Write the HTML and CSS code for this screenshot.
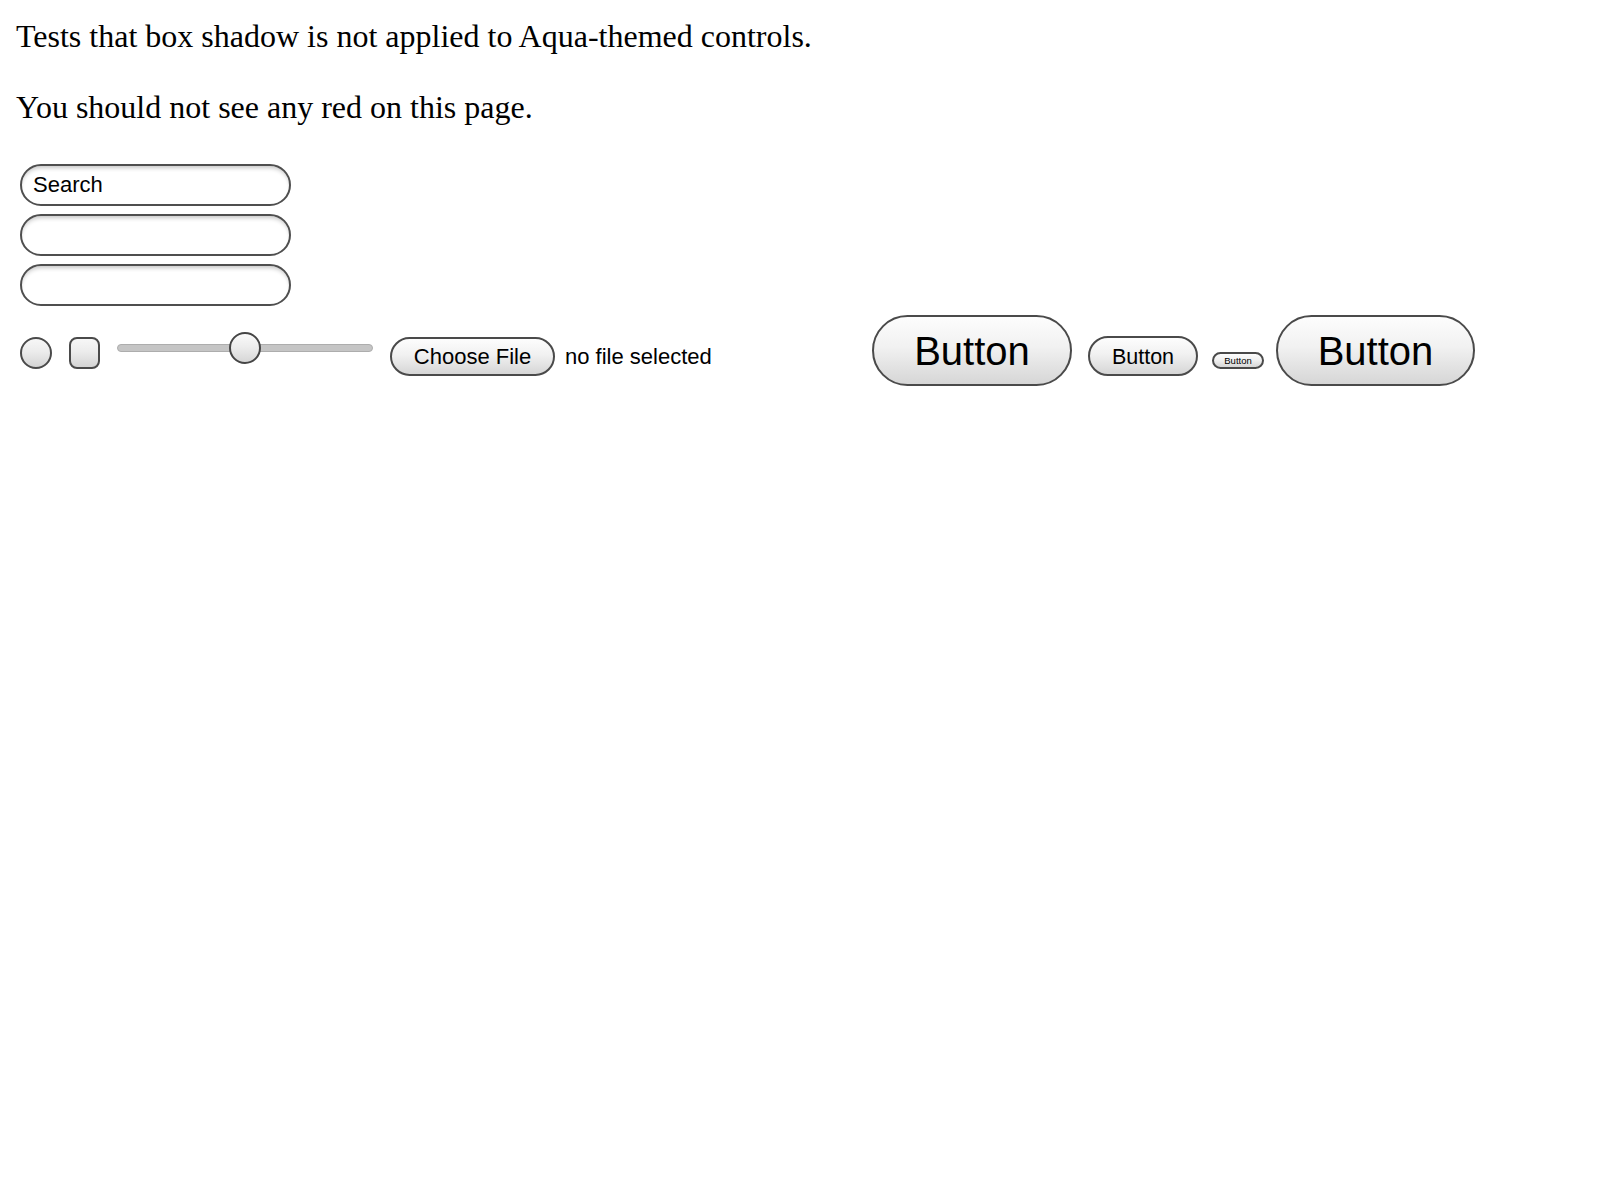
FILE: index.html
```html
<!DOCTYPE html>
<html lang="en">
<head>
<meta charset="utf-8">
<title>Box shadow on Aqua-themed controls</title>
<link rel="stylesheet" href="styles.css">
</head>
<body>
<p class="intro">Tests that box shadow is not applied to Aqua-themed controls.</p>
<p class="intro second">You should not see any red on this page.</p>
<div class="fields">
  <input class="field" type="text" value="Search" aria-label="Search">
  <input class="field" type="text" aria-label="Text field">
  <input class="field" type="text" aria-label="Text field">
</div>
<div class="controls">
  <input class="radio" type="radio" aria-label="Radio">
  <input class="check" type="checkbox" aria-label="Checkbox">
  <input class="slider" type="range" min="0" max="100" value="50" aria-label="Slider">
  <button class="btn file-btn" type="button">Choose File</button>
  <span class="file-text">no file selected</span>
  <button class="btn big" type="button">Button</button>
  <button class="btn medium" type="button">Button</button>
  <button class="btn small" type="button">Button</button>
  <button class="btn big big-last" type="button">Button</button>
</div>
</body>
</html>
```
FILE: styles.css
```css
html, body {
  background: #ffffff;
}

body {
  margin: 0;
  padding: 18px 0 0 16px;
  font-family: "Liberation Serif", "Times New Roman", serif;
  color: #000000;
}

.intro {
  margin: 0;
  font-size: 32px;
  line-height: 37px;
}

.intro.second {
  margin-top: 34px;
}

.fields {
  display: flex;
  flex-direction: column;
  gap: 8px;
  margin: 38px 0 0 4px;
}

.field {
  -webkit-appearance: none;
  appearance: none;
  display: block;
  width: 271px;
  height: 42px;
  box-sizing: border-box;
  margin: 0;
  padding: 0 0 0 11px;
  border: 2px solid #4f4f4f;
  border-radius: 21px;
  background: #ffffff;
  box-shadow: inset 0 4px 4px -2px rgba(0, 0, 0, 0.22);
  font-family: "Liberation Sans", Arial, sans-serif;
  font-size: 22px;
  color: #000000;
  outline: none;
}

.controls {
  display: flex;
  align-items: flex-start;
  margin: 9px 0 0 4px;
}

.radio,
.check {
  -webkit-appearance: none;
  appearance: none;
  box-sizing: border-box;
  height: 32px;
  margin: 22px 0 0 0;
  border: 2px solid #4a4a4a;
  background: linear-gradient(#f7f7f7, #ececec 45%, #d4d4d4);
  flex-shrink: 0;
}

.radio {
  width: 32px;
  border-radius: 50%;
}

.check {
  width: 31px;
  margin-left: 17px;
  border-radius: 8px;
}

.slider {
  -webkit-appearance: none;
  appearance: none;
  width: 256px;
  height: 32px;
  margin: 17px 0 0 17px;
  padding: 0;
  background: transparent;
  flex-shrink: 0;
}

.slider::-webkit-slider-runnable-track {
  height: 8px;
  border: 1px solid #adadad;
  border-radius: 5px;
  background: #c5c5c5;
}

.slider::-webkit-slider-thumb {
  -webkit-appearance: none;
  appearance: none;
  box-sizing: border-box;
  width: 32px;
  height: 32px;
  margin-top: -13px;
  border: 2px solid #454545;
  border-radius: 50%;
  background: linear-gradient(#fafafa, #ededed 45%, #d6d6d6);
}

.btn {
  -webkit-appearance: none;
  appearance: none;
  box-sizing: border-box;
  flex-shrink: 0;
  padding: 0;
  border: 2px solid #4a4a4a;
  background: linear-gradient(#fdfdfd, #f1f1f1 45%, #d6d6d6);
  font-family: "Liberation Sans", Arial, sans-serif;
  color: #000000;
  text-align: center;
  line-height: 1;
}

.file-btn {
  width: 165px;
  height: 39px;
  margin: 22px 0 0 17px;
  border-radius: 19.5px;
  font-size: 22px;
}

.file-text {
  flex-shrink: 0;
  width: 307px;
  margin: 22px 0 0 10px;
  font-family: "Liberation Sans", Arial, sans-serif;
  font-size: 22px;
  line-height: 39px;
}

.big {
  width: 200px;
  height: 71px;
  margin: 0;
  border-radius: 35.5px;
  font-size: 40px;
}

.big-last {
  width: 199px;
  margin-left: 12px;
}

.medium {
  width: 110px;
  height: 40px;
  margin: 21px 0 0 16px;
  padding-top: 3px;
  border-radius: 20px;
  font-size: 21.5px;
}

.small {
  width: 52px;
  height: 17px;
  margin: 37px 0 0 14px;
  border-width: 2px;
  border-radius: 8.5px;
  font-size: 9.5px;
}
```
